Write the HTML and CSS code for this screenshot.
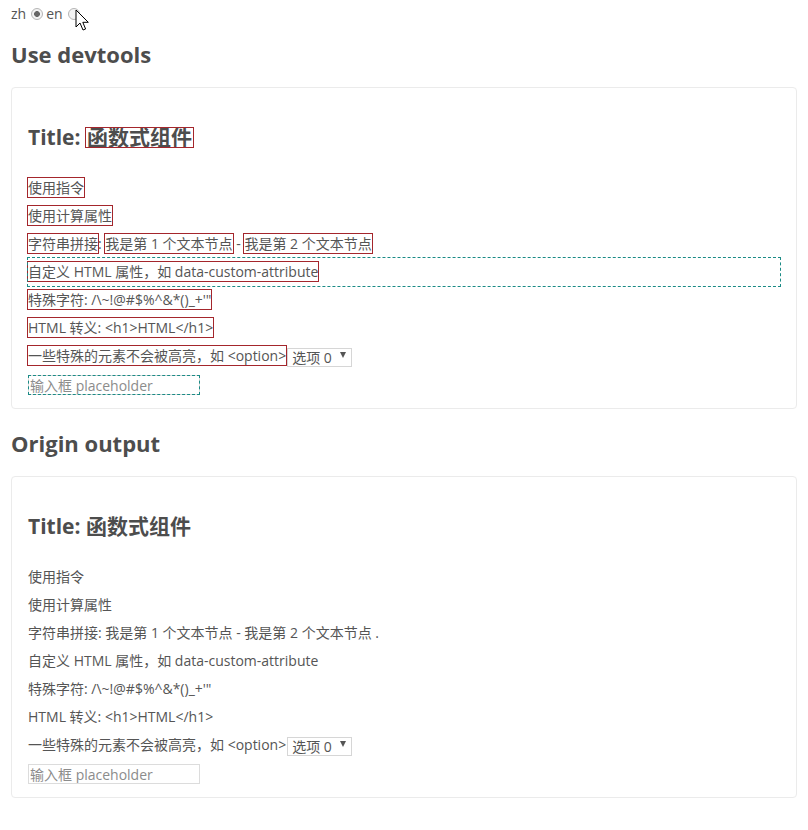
FILE: index.html
```html
<!DOCTYPE html>
<html lang="zh">
<head>
<meta charset="utf-8">
<title>Use devtools</title>
<link rel="stylesheet" href="styles.css">
</head>
<body>
<div class="lang">
  <span class="lang-label">zh</span><span class="radio checked"></span><span class="lang-label">en</span><span class="radio"></span>
</div>
<svg class="cursor" width="15" height="23" viewBox="0 0 15 23"><path d="M1 1 L1 18 L5 14 L8 21 L10.6 20 L7.8 13.3 L13.3 13.3 Z" fill="#fff" stroke="#000" stroke-width="1" stroke-linejoin="miter"/></svg>

<h2 class="section-title">Use devtools</h2>
<div class="card">
  <h3 class="title">Title: <span class="hl hl-title">函数式组件</span></h3>
  <p class="row"><span class="hl">使用指令</span></p>
  <p class="row"><span class="hl">使用计算属性</span></p>
  <p class="row"><span class="hl">字符串拼接</span>: <span class="hl">我是第 1 个文本节点</span> - <span class="hl">我是第 2 个文本节点</span></p>
  <p class="row dashed"><span class="hl">自定义 HTML 属性，如 data-custom-attribute</span></p>
  <p class="row"><span class="hl">特殊字符: /\~!@#$%^&amp;*()_+'"</span></p>
  <p class="row"><span class="hl">HTML 转义: &lt;h1&gt;HTML&lt;/h1&gt;</span></p>
  <p class="row"><span class="hl">一些特殊的元素不会被高亮，如 &lt;option&gt;</span><span class="sel">选项 0<i class="caret"></i></span></p>
  <p class="row"><input class="inp inp-dashed" type="text" placeholder="输入框 placeholder"></p>
</div>

<h2 class="section-title second">Origin output</h2>
<div class="card">
  <h3 class="title">Title: <span class="plain-title">函数式组件</span></h3>
  <p class="row"><span class="txt">使用指令</span></p>
  <p class="row"><span class="txt">使用计算属性</span></p>
  <p class="row"><span class="txt">字符串拼接: 我是第 1 个文本节点 - 我是第 2 个文本节点 .</span></p>
  <p class="row"><span class="txt">自定义 HTML 属性，如 data-custom-attribute</span></p>
  <p class="row"><span class="txt">特殊字符: /\~!@#$%^&amp;*()_+'"</span></p>
  <p class="row"><span class="txt">HTML 转义: &lt;h1&gt;HTML&lt;/h1&gt;</span></p>
  <p class="row"><span class="txt">一些特殊的元素不会被高亮，如 &lt;option&gt;</span><span class="sel">选项 0<i class="caret"></i></span></p>
  <p class="row"><input class="inp" type="text" placeholder="输入框 placeholder"></p>
</div>
</body>
</html>
```

FILE: styles.css
```css
html, body {
  background: #fff;
}
body {
  margin: 0;
  padding: 0 11px 30px;
  font-family: "Open Sans", "Noto Sans CJK SC", sans-serif;
  font-size: 14px;
  color: #555;
  position: relative;
}

.lang {
  display: flex;
  align-items: center;
  height: 20px;
  padding-top: 4px;
  line-height: 20px;
}
.lang-label {
  display: inline-block;
}
.radio {
  display: inline-block;
  width: 12px;
  height: 12px;
  box-sizing: border-box;
  border: 1px solid #b5b5b5;
  border-radius: 50%;
  background: #f3f3f3;
  margin: 0 3px 0 5px;
}
.radio.checked {
  background: radial-gradient(circle, #676767 0 2.6px, #f3f3f3 3.2px);
}

.cursor {
  position: absolute;
  left: 75px;
  top: 9px;
}

.section-title {
  font-size: 22px;
  font-weight: 700;
  line-height: 30px;
  color: #4d4d4d;
  margin: 15px 0 18px;
}
.section-title.second {
  margin-top: 19px;
}

.card {
  border: 1px solid #ebebeb;
  border-radius: 4px;
  padding: 0 16px 10px;
}

.title {
  font-size: 21px;
  font-weight: 700;
  line-height: 28px;
  color: #4d4d4d;
  margin: 35px 0 23px;
}
.hl-title {
  line-height: 28px;
  padding: 0 1px;
}

.row {
  margin: 0;
  height: 28px;
  line-height: 28px;
  white-space: nowrap;
}
.row.dashed {
  outline: 1px dashed #1b8b86;
}

.hl, .txt {
  display: inline-block;
  line-height: 19px;
}
.hl {
  outline: 1px solid #a4262c;
}

.sel {
  display: inline-block;
  box-sizing: border-box;
  height: 19px;
  line-height: 17px;
  border: 1px solid #d6d6d6;
  padding: 0 5px 0 4px;
  margin-left: 1px;
  vertical-align: middle;
  color: #555;
}
.caret {
  display: inline-block;
  width: 0;
  height: 0;
  border-left: 3px solid transparent;
  border-right: 3px solid transparent;
  border-top: 6px solid #555;
  margin-left: 8px;
  vertical-align: 5px;
}

.inp {
  width: 172px;
  height: 20px;
  box-sizing: border-box;
  border: 1px solid #dcdcdc;
  padding: 0 1px;
  margin: 0;
  font: 14px "Open Sans", "Noto Sans CJK SC", sans-serif;
  color: #555;
  vertical-align: middle;
  background: #fff;
}
.inp::placeholder {
  color: #8c8c8c;
}
.inp-dashed {
  outline: 1px dashed #1b8b86;
  outline-offset: -1px;
}
```
